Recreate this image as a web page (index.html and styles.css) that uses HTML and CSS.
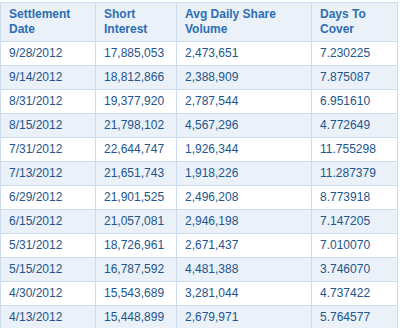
FILE: index.html
```html
<!DOCTYPE html>
<html>
<head>
    <title>Short Interest</title>
    <meta charset="UTF-8">
    <link rel="stylesheet" href="styles.css">
</head>
<body>
    <table class="short-table">
        <colgroup>
            <col class="col-date">
            <col class="col-short">
            <col class="col-volume">
            <col class="col-days">
        </colgroup>
        <thead>
            <tr>
                <th>Settlement<br>Date</th>
                <th>Short<br>Interest</th>
                <th>Avg Daily Share<br>Volume</th>
                <th>Days To<br>Cover</th>
            </tr>
        </thead>
        <tbody>
            <tr><td>9/28/2012</td><td>17,885,053</td><td>2,473,651</td><td>7.230225</td></tr>
            <tr><td>9/14/2012</td><td>18,812,866</td><td>2,388,909</td><td>7.875087</td></tr>
            <tr><td>8/31/2012</td><td>19,377,920</td><td>2,787,544</td><td>6.951610</td></tr>
            <tr><td>8/15/2012</td><td>21,798,102</td><td>4,567,296</td><td>4.772649</td></tr>
            <tr><td>7/31/2012</td><td>22,644,747</td><td>1,926,344</td><td>11.755298</td></tr>
            <tr><td>7/13/2012</td><td>21,651,743</td><td>1,918,226</td><td>11.287379</td></tr>
            <tr><td>6/29/2012</td><td>21,901,525</td><td>2,496,208</td><td>8.773918</td></tr>
            <tr><td>6/15/2012</td><td>21,057,081</td><td>2,946,198</td><td>7.147205</td></tr>
            <tr><td>5/31/2012</td><td>18,726,961</td><td>2,671,437</td><td>7.010070</td></tr>
            <tr><td>5/15/2012</td><td>16,787,592</td><td>4,481,388</td><td>3.746070</td></tr>
            <tr><td>4/30/2012</td><td>15,543,689</td><td>3,281,044</td><td>4.737422</td></tr>
            <tr><td>4/13/2012</td><td>15,448,899</td><td>2,679,971</td><td>5.764577</td></tr>
        </tbody>
    </table>
</body>
</html>
```

FILE: styles.css
```css
body {
    margin: 0;
    padding: 2px 0 0 0;
    background-color: #fff;
    font-family: 'Liberation Sans', Arial, sans-serif;
    font-size: 12px;
}
.short-table {
    width: 397px;
    border-collapse: collapse;
    table-layout: fixed;
}
.col-date {
    width: 95px;
}
.col-short {
    width: 81px;
}
.col-volume {
    width: 135px;
}
.col-days {
    width: 86px;
}
.short-table th,
.short-table td {
    border: 1px solid #cddcec;
    padding: 4px 8px;
    line-height: 15px;
    text-align: left;
    vertical-align: top;
}
.short-table th {
    background-color: #eaf1f9;
    color: #2d6db3;
    font-weight: bold;
}
.short-table td {
    color: #22558c;
    white-space: nowrap;
}
.short-table tbody tr:nth-child(even) td {
    background-color: #eaf1f9;
}
```
